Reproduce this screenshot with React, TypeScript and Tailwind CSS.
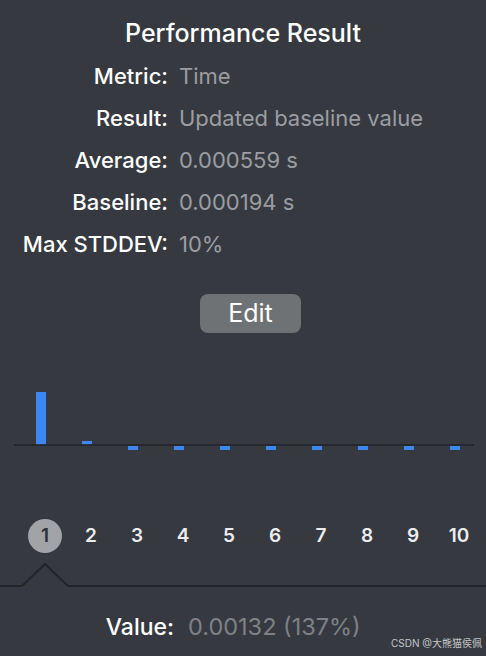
import React from 'react'

const rows = [
  { label: 'Metric:', value: 'Time' },
  { label: 'Result:', value: 'Updated baseline value' },
  { label: 'Average:', value: '0.000559 s' },
  { label: 'Baseline:', value: '0.000194 s' },
  { label: 'Max STDDEV:', value: '10%' },
]

// bar heights relative to the zero line (negative = below)
const bars = [53, 4, -4, -4, -4, -4, -4, -4, -4, -4]

function Chart() {
  return (
    <svg width={486} height={80} className="block">
      {bars.map((h, i) => {
        const x = 36 + i * 46
        const y = h > 0 ? 65 - h : 66
        return <rect key={i} x={x} y={y} width={10} height={Math.abs(h)} fill="#3b88f5" />
      })}
      <rect x={14} y={64} width={460} height={2} fill="#24262a" opacity={0.85} />
    </svg>
  )
}

function Notch() {
  return (
    <svg width={486} height={28} className="block">
      <polyline
        points="0,24 22,24 45,2 68,24 486,24"
        fill="none"
        stroke="#222428"
        strokeWidth={2}
      />
    </svg>
  )
}

export default function App() {
  return (
    <div
      className="w-[486px] h-[656px] bg-[#363a40] overflow-hidden relative"
      style={{ fontFamily: 'Inter, "Noto Sans", "Noto Sans CJK SC", sans-serif' }}
    >
      <div className="pt-[19px] text-center text-white text-[25px] leading-[28px] font-medium">
        Performance Result
      </div>

      <div className="mt-[8px] flex flex-col">
        {rows.map((r) => (
          <div key={r.label} className="flex items-center h-[42px] text-[22px]">
            <div className="w-[168px] text-right text-white font-medium">{r.label}</div>
            <div className="pl-[11px] text-[#9b9da2]">{r.value}</div>
          </div>
        ))}
      </div>

      <div className="mt-[29px] ml-[200px] w-[101px] h-[39px] rounded-[8px] bg-[#6e7275] flex items-center justify-center text-white text-[25px]">
        Edit
      </div>

      <div className="mt-[47px]">
        <Chart />
      </div>

      <div className="mt-[59px] flex pl-[22px]">
        {Array.from({ length: 10 }).map((_, i) => (
          <div key={i} className="w-[46px] flex justify-center">
            <div
              className={
                i === 0
                  ? 'w-[34px] h-[34px] rounded-full bg-[#a2a3a7] flex items-center justify-center text-[#2e3136] text-[19px] font-semibold'
                  : 'w-[34px] h-[34px] flex items-center justify-center text-[#ececee] text-[19px] font-semibold'
              }
            >
              {i + 1}
            </div>
          </div>
        ))}
      </div>

      <div className="mt-[9px]">
        <Notch />
      </div>

      <div className="mt-[24px] flex items-center leading-[26px]">
        <div className="w-[174px] text-right text-white font-medium text-[23px]">Value:</div>
        <div className="pl-[14px] text-[#7f8186] text-[23.5px]">0.00132 (137%)</div>
      </div>

      <div className="absolute right-[4px] bottom-[5px] text-[10px] text-[#c4c6ca]">
        CSDN @大熊猫侯佩
      </div>
    </div>
  )
}
